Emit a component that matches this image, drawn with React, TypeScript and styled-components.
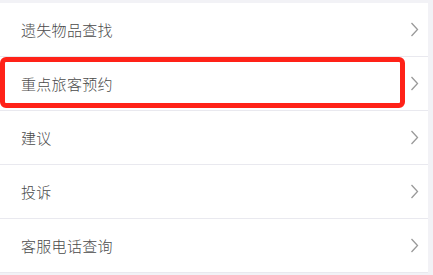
import React from 'react';
import styled, { createGlobalStyle } from 'styled-components';

const GlobalStyle = createGlobalStyle`
  html, body {
    margin: 0;
    padding: 0;
    background: #f2f2f6;
    font-family: "Noto Sans CJK SC", "Noto Sans", sans-serif;
  }
`;

const Page = styled.div`
  padding-top: 3px;
  width: 433px;
  height: 275px;
  box-sizing: border-box;
  overflow: hidden;
`;

const List = styled.div`
  width: 428px;
  background: #ffffff;
`;

const Row = styled.div<{ $highlight?: boolean }>`
  position: relative;
  height: 54px;
  box-sizing: border-box;
  border-bottom: 1px solid #e9e9ef;
  display: flex;
  align-items: center;
  justify-content: space-between;
  padding: 0 9px 0 21px;

  ${({ $highlight }) =>
    $highlight &&
    `
    &::after {
      content: '';
      position: absolute;
      left: 0;
      top: 0;
      width: 405px;
      height: 51px;
      box-sizing: border-box;
      border: 5px solid #ff2218;
      border-radius: 6px;
    }
  `}
`;

const Label = styled.span`
  font-size: 15px;
  font-weight: 300;
  color: #4a4a4a;
  letter-spacing: 0.3px;
`;

const Chevron = () => (
  <svg width="9" height="15" viewBox="0 0 9 15" fill="none">
    <polyline points="1.5,1 7.5,7.5 1.5,14" stroke="#9a9a9a" strokeWidth="1.3" />
  </svg>
);

const items = ['遗失物品查找', '重点旅客预约', '建议', '投诉', '客服电话查询'];

const App: React.FC = () => (
  <Page>
    <GlobalStyle />
    <List>
      {items.map((item, i) => (
        <Row key={item} $highlight={i === 1}>
          <Label>{item}</Label>
          <Chevron />
        </Row>
      ))}
    </List>
  </Page>
);

export default App;
